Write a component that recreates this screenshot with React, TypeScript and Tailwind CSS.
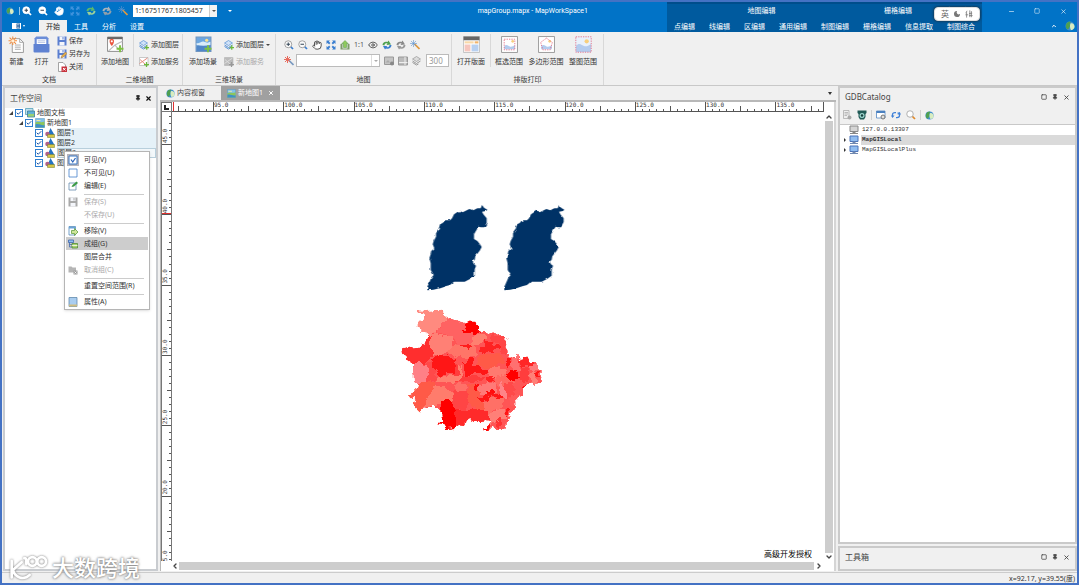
import { useEffect, useRef, useState } from "react";
import type { ReactNode } from "react";
import {
  Check,
  ChevronDown,
  ChevronLeft,
  ChevronRight,
  ChevronUp,
  Eye,
  Hand,
  Minus,
  Moon,
  Pin,
  Square,
  X,
} from "lucide-react";

type IconProps = { className?: string };

const small = "h-[10px] w-[10px] shrink-0";
const big = "h-[17px] w-[17px] shrink-0";

const Zoomer = ({ plus, light }: { plus?: boolean; light?: boolean }) => (
  <svg viewBox="0 0 20 20" className={small}>
    <path d="M12 12l6 6" stroke={light ? "#fff" : "#3b7fd0"} strokeWidth="3.5" />
    <circle cx="8.5" cy="8.5" r="7" fill={light ? "#fff" : "#fafafa"} stroke={light ? "#fff" : "#888"} strokeWidth="1.5" />
    <path d={plus ? "M5 8.5h7M8.5 5v7" : "M5 8.5h7"} stroke="#345" strokeWidth="2" />
  </svg>
);

const FullExtent = ({ color = "#3b7fd0" }: { color?: string }) => (
  <svg viewBox="0 0 20 20" className={small} fill={color}>
    <path d="M1 1h7L5.800 3.200l3 3-2.600 2.600-3-3L1 8zM19 1v7l-2.200-2.200-3 3-2.600-2.600 3-3L12 1zM1 19v-7l2.200 2.200 3-3 2.600 2.600-3 3L8 19zM19 19h-7l2.200-2.200-3-3 2.600-2.600 3 3L19 12z" />
  </svg>
);

const Globe = ({ className = small }: IconProps) => (
  <svg viewBox="0 0 20 20" className={className}>
    <circle cx="10" cy="10" r="9" fill="#3f8fd0" />
    <path d="M10 1a9 9 0 0 0-5 16c3-1 3-4 5-6s-2-4 0-6 1-3 0-4z" fill="#4fa050" />
    <path d="M11 5c4-2 7 1 8 5s-3 8-7 8c-2-3-3-9-1-13z" fill="#d8ecc0" />
  </svg>
);

const Refresh = ({ tone = "#3b7fd0", second = "#4ea04e" }: { tone?: string; second?: string }) => (
  <svg viewBox="0 0 20 20" className={small}>
    <path d="M1 10c0-5 5-8 10-6l2-3 5 8-9 1 2-3C7 6 5 8 5 11z" fill={second} />
    <path d="M19 10c0 6-6 9-11 7l-2 2-4-7h9l-2 2c4 1 6-1 6-4z" fill={tone} />
  </svg>
);

const Wand = ({ red }: { red?: boolean }) => (
  <svg viewBox="0 0 20 20" className={small}>
    <path d="M9 8l10 10" stroke={red ? "#7a9ac0" : "#e0993d"} strokeWidth="3.500" />
    <path d="M7 0v14M0 7h14M2 2l10 10M12 2L2 12" stroke={red ? "#e96b5d" : "#5f93cf"} strokeWidth={red ? 2 : 1.200} />
  </svg>
);

const GreenUp = () => (
  <svg viewBox="0 0 20 20" className={small}>
    <path d="M1 8l4-1v10h10V7l4 1v11H1z" fill="#7c9a6a" />
    <path d="M10 1l6 6h-3v8H7V7H4z" fill="#8fc95c" stroke="#4c9a38" />
  </svg>
);

const Disk = ({ gray, pencil }: { gray?: boolean; pencil?: boolean }) => (
  <svg viewBox="0 0 20 20" className={small}>
    <path d="M1 1h18v18H1z" fill={gray ? "#a9a9a9" : "#5b7fd0"} />
    <path d="M5 1h10v7H5zM5 12h10v7H5z" fill="#f4f6fb" />
    <path d="M11 2h2v5h-2z" fill={gray ? "#a9a9a9" : "#5b7fd0"} />
    {pencil && <path d="M8 18l2-5 7-7 3 3-7 7z" fill="#e9b04a" stroke="#8a6a3a" />}
  </svg>
);

const CloseDoc = () => (
  <svg viewBox="0 0 20 20" className={small}>
    <path d="M3 1h9l5 5v13H3z" fill="#fff" stroke="#888" strokeWidth="1.500" />
    <path d="M9 9h11v11H9z" fill="#c8323c" />
    <path d="M12 12l5 5M17 12l-5 5" stroke="#fff" strokeWidth="2" />
  </svg>
);

const NewDoc = () => (
  <svg viewBox="0 0 32 32" className={big}>
    <path d="M8 5h14l7 7v19H8z" fill="#fdfdfd" stroke="#888" strokeWidth="1.500" />
    <path d="M22 5v7h7M13 17h11M13 21h11M13 25h11" fill="none" stroke="#999" strokeWidth="1.500" />
    <path d="M9 1v16M1 9h16M3 3l12 12M15 3L3 15" stroke="#f08a3c" strokeWidth="2" />
    <circle cx="9" cy="9" r="3" fill="#fff0d8" />
  </svg>
);

const OpenFolder = () => (
  <svg viewBox="0 0 32 32" className={big}>
    <path d="M3 4l3-3h20l3 3v14H3z" fill="#6b8dd8" />
    <path d="M7 6h18v10H7z" fill="#fff" />
    <path d="M9 9h14M9 12h14" stroke="#a9b9df" strokeWidth="1.500" />
    <path d="M1 15h30v14q0 2-2 2H3q-2 0-2-2z" fill="#5f82d2" />
  </svg>
);

const AddMap = () => (
  <svg viewBox="0 0 32 32" className={big}>
    <path d="M1 2h28v27H1z" fill="#fff" stroke="#777" strokeWidth="1.500" />
    <path d="M1 2h28v4H1z" fill="#666" />
    <path d="M3 28l12-11 14-7M15 17l8 9" fill="none" stroke="#bbb" strokeWidth="2" />
    <path d="M9 19C3 12 4 5 9 5s6 7 0 14z" fill="#e9573f" />
    <circle cx="9" cy="10" r="2" fill="#fff" />
    <path d="M18 24h13M24.500 17.500v13" stroke="#7cc142" strokeWidth="3.500" />
  </svg>
);

const AddScene = () => (
  <svg viewBox="0 0 32 32" className={big}>
    <path d="M2 2h28v27H2z" fill="#6da7e0" stroke="#6f95c0" strokeWidth="2" />
    <path d="M3 20c5-7 8-1 12-4s8-4 14 1v11H3z" fill="#4f86c8" />
    <path d="M3 13c7 2 9-4 14-2s8 2 12 0v6c-8 2-18 2-26 0z" fill="#d9ecf9" />
    <circle cx="22" cy="8" r="3" fill="#ffe28a" />
    <path d="M18 24h13M24.500 17.500v13" stroke="#7cc142" strokeWidth="3.500" />
  </svg>
);

const AddLayer = ({ gray }: { gray?: boolean }) => (
  <svg viewBox="0 0 20 20" className={small}>
    <path d="M1 6l8-5 8 5-8 5z" fill={gray ? "#ddd" : "#cfe2f8"} stroke={gray ? "#999" : "#5b93d6"} strokeWidth="1.500" />
    <path d="M1 10l8 5 8-5M1 13l8 5 4-2" fill="none" stroke={gray ? "#999" : "#5b93d6"} strokeWidth="2" />
    {!gray && <path d="M11 15h9M15.500 10.500v9" stroke="#6cb83a" strokeWidth="2.500" />}
  </svg>
);

const AddService = ({ gray }: { gray?: boolean }) => (
  <svg viewBox="0 0 20 20" className={small}>
    <path d="M1 1h17v16H1z" fill={gray ? "#bbb" : "#fff"} stroke={gray ? "#aaa" : "#999"} />
    <path d="M1 13L17 2M2 5l11 10" stroke={gray ? "#ddd" : "#e78a7c"} strokeWidth="2" />
    <path d="M10 15h10M15 10v10" stroke={gray ? "#999" : "#6cb83a"} strokeWidth="2.500" />
  </svg>
);

const LayoutPage = () => (
  <svg viewBox="0 0 32 32" className={big}>
    <path d="M1 1h30v30H1z" fill="#fff" stroke="#999" />
    <path d="M1 1h30v7H1z" fill="#666" />
    <path d="M3 10h17v4H3z" fill="#f9d9a8" />
    <path d="M22 10h7v4h-7z" fill="#f2b36a" />
    <path d="M3 16h11v13H3z" fill="#f6c6bd" />
    <path d="M16 16h13v13H16z" fill="#b8d0f0" />
  </svg>
);

const RangeIcon = ({ kind }: { kind: "box" | "poly" | "all" }) => (
  <svg viewBox="0 0 32 32" className={big}>
    {kind !== "all" && <path d="M1 1h30v30H1z" fill="#fff" stroke="#888" strokeWidth="1.500" />}
    {kind === "all" && <path d="M1 1h30v30H1z" fill="#e9f1fb" />}
    <path
      d={kind === "all" ? "M2 19c6-8 11-1 15 0s8 0 13-4v15H2z" : "M6 20c4-6 8-1 11 0s6-1 9-3v8H6z"}
      fill="#b4ccee"
    />
    <circle cx="22" cy="10" r={kind === "all" ? 4 : 2.500} fill="#f7cf7d" />
    <path
      d={kind === "poly" ? "M16 4l11 8-4 14H9L5 12z" : kind === "box" ? "M6 6h20v20H6z" : "M1.500 1.500h29v29h-29z"}
      fill="none"
      stroke="#e0607a"
      strokeWidth="1.500"
      strokeDasharray="2.500 2"
    />
  </svg>
);

const Picture = ({ className = small }: IconProps) => (
  <svg viewBox="0 0 20 20" className={className}>
    <path d="M1 1h18v18H1z" fill="#7fc0ea" stroke="#5d94b8" />
    <path d="M1 9c6-4 9 2 18-2v12H1z" fill="#8cc65c" />
    <path d="M1 13c6-3 12 3 18 1v5H1z" fill="#3f8fc8" />
    <path d="M3 4h8v2H3z" fill="#f4e8a0" />
  </svg>
);

const MapStack = () => (
  <svg viewBox="0 0 20 20" className={small}>
    <path d="M1 1h15v12H1z" fill="#bfe0ee" stroke="#4d9cb4" strokeWidth="1.500" />
    <path d="M5 6h14v12H5z" fill="#5fb0d8" stroke="#3a7890" strokeWidth="1.500" />
    <path d="M6 13c5-4 8 1 12-2v6H6z" fill="#9bd070" />
  </svg>
);

const LayerIcon = () => (
  <svg viewBox="0 0 20 20" className={small}>
    <path d="M11 0l8 14H5z" fill="#2474c4" />
    <circle cx="5" cy="12" r="4.500" fill="#b0608c" />
    <path d="M5 13h14v6H5z" fill="#d6c545" stroke="#6c7a30" />
  </svg>
);

const Monitor = ({ gray }: { gray?: boolean }) => (
  <svg viewBox="0 0 20 20" className={small}>
    <path d="M2 2h16v11H2z" fill={gray ? "#d5d5d5" : "#8fbcf0"} stroke={gray ? "#888" : "#4a72b8"} strokeWidth="2" />
    <path d="M7 13h6v3h5v2H2v-2h5z" fill={gray ? "#888" : "#7088b0"} />
  </svg>
);

const MenuIcon = ({ kind }: { kind?: string }) => {
  if (kind === "checked")
    return (
      <svg viewBox="0 0 24 24" className="h-3 w-3">
        <path d="M0 0h24v24H0z" fill="#b4b4bc" />
        <path d="M4 4h16v16H4z" fill="#fff" stroke="#3a78c8" strokeWidth="2" />
        <path d="M8 11l3.500 5L17 8" fill="none" stroke="#2a62b8" strokeWidth="2.500" />
      </svg>
    );
  if (kind === "unchecked")
    return (
      <svg viewBox="0 0 24 24" className="h-3 w-3">
        <path d="M4 4h16v16H4z" fill="#fff" stroke="#3a78c8" strokeWidth="1.500" />
      </svg>
    );
  if (kind === "edit")
    return (
      <svg viewBox="0 0 20 20" className={small}>
        <path d="M2 4h14v14H2z" fill="#fff" stroke="#5b84a8" strokeWidth="1.500" />
        <path d="M7 12l2-4 8-7 3 3-8 7z" fill="#3b9a45" />
      </svg>
    );
  if (kind === "save") return <Disk gray />;
  if (kind === "remove")
    return (
      <svg viewBox="0 0 20 20" className={small}>
        <path d="M2 1h13v17H2z" fill="#fff" stroke="#4a84b8" strokeWidth="1.500" />
        <path d="M2 2h13v3H2z" fill="#6aa4d8" />
        <path d="M7 9h6V5l7 7-7 7v-4H7z" fill="#cfe69a" stroke="#5c9a3a" strokeWidth="1.500" />
      </svg>
    );
  if (kind === "group")
    return (
      <svg viewBox="0 0 20 20" className={small}>
        <path d="M1 2h10v5H1z" fill="#8fbcf0" stroke="#3a62a8" strokeWidth="1.500" />
        <path d="M3 7v9h5M3 11h5" fill="none" stroke="#3a62a8" strokeWidth="1.500" />
        <path d="M8 9h11v9H8z" fill="#a9d070" stroke="#4c8a30" strokeWidth="1.500" />
        <path d="M8 13h11" stroke="#fff" strokeWidth="1.500" />
      </svg>
    );
  if (kind === "ungroup")
    return (
      <svg viewBox="0 0 20 20" className={small}>
        <path d="M1 3h6l2 2h7v10H1z" fill="#b5b5b5" />
        <path d="M11 11h8v8h-8z" fill="#9d9d9d" />
        <path d="M13 13l4 4M17 13l-4 4" stroke="#fff" strokeWidth="1.500" />
      </svg>
    );
  if (kind === "props")
    return (
      <svg viewBox="0 0 20 20" className={small}>
        <path d="M2 1h16v18H2z" fill="#a9cdf0" stroke="#5b84a8" strokeWidth="1.500" />
        <path d="M2 15h16v4H2z" fill="#d0bc80" />
      </svg>
    );
  return null;
};

const BigButton = ({ icon, label, className = "w-[38px]" }: { icon: ReactNode; label: string; className?: string }) => (
  <button className={`flex h-[31px] flex-col items-center justify-between whitespace-nowrap ${className}`}>
    {icon}
    <span>{label}</span>
  </button>
);

const SmallButton = ({ icon, label, disabled, arrow }: { icon: ReactNode; label: string; disabled?: boolean; arrow?: boolean }) => (
  <button disabled={disabled} className="flex items-center gap-[2px] whitespace-nowrap disabled:text-[#a8a8a8]">
    {icon}
    {label}
    {arrow && <span className="border-x-2 border-t-2 border-x-transparent border-t-[#444]" />}
  </button>
);

const RibbonGroup = ({ label, className, children }: { label: string; className: string; children: ReactNode }) => (
  <section className={`flex flex-col justify-between border-r border-[#d8d8d8] ${className}`}>
    <div className="flex">{children}</div>
    <h2 className="text-center">{label}</h2>
  </section>
);

const contextGroups = [
  { title: "地图编辑", tabs: ["点编辑", "线编辑", "区编辑", "通用编辑", "制图编辑"] },
  { title: "栅格编辑", tabs: ["栅格编辑", "信息提取"] },
  { title: "制图综合", tabs: ["制图综合"] },
];

const TitleBar = () => (
  <header className="flex h-[30px] shrink-0 bg-[#0173c7] text-white">
    <div className="flex flex-1 flex-col">
      <div className="flex h-[18px] items-center pl-1">
        <Globe className="mr-[5px] h-2 w-2" />
        <span className="mr-[2px] h-2 w-px bg-white/60" />
        <div className="flex items-center gap-[6px]">
          <button aria-label="放大"><Zoomer plus light /></button>
          <button aria-label="缩小"><Zoomer light /></button>
          <button aria-label="平移"><Hand className={small} fill="white" stroke="#e8f2fa" /></button>
          <button aria-label="全图"><FullExtent color="#3f92dc" /></button>
          <button aria-label="更新"><Refresh tone="#9bd09b" second="#5cb86c" /></button>
          <button aria-label="停止"><Refresh tone="#8f9faa" second="#a9b3ba" /></button>
          <button aria-label="清除"><Wand /></button>
        </div>
        <div className="ml-[5px] flex h-3 w-[84px] bg-white text-[#333]">
          <input aria-label="比例尺" defaultValue="1:16751767.1805457" className="w-full min-w-0 px-[2px] outline-none" />
          <button aria-label="选择比例尺" className="flex w-2 shrink-0 items-center justify-center border-l border-[#ccc] bg-[#f2f2f2]">
            <span className="border-x-2 border-t-2 border-x-transparent border-t-[#555]" />
          </button>
        </div>
        <span className="ml-[11px] border-x-2 border-t-2 border-x-transparent border-t-white" />
        <h1 className="ml-auto pr-[79px] font-['Roboto',sans-serif]">mapGroup.mapx - MapWorkSpace1</h1>
      </div>
      <nav className="flex h-3 items-center pl-[10px]">
        <button aria-label="文件" className="mr-[13px] flex w-[14px] items-center gap-[2px]">
          <svg viewBox="0 0 18 12" className="h-[6px] w-[9px]">
            <path d="M0 0h18v12H0z" fill="#fff" />
            <path d="M9 1h7v10H9z" fill="#1b5a9a" />
            <path d="M10 3h5M10 6h5M10 9h5" stroke="#fff" />
          </svg>
          <span className="border-x-[1px] border-t-2 border-x-transparent border-t-white" />
        </button>
        <button className="h-full w-7 bg-[#f0f0f0] pt-[2px] text-[#222]">开始</button>
        <button className="h-full w-7 pt-[2px]">工具</button>
        <button className="h-full w-7 pt-[2px]">分析</button>
        <button className="h-full w-7 pt-[2px]">设置</button>
      </nav>
    </div>

    <div className="relative flex border-t-2 border-[#004d8b] bg-[#005a9e]">
      {contextGroups.map((group) => (
        <div key={group.title} className="flex flex-col">
          <div className="flex h-4 items-center justify-center pb-[2px]">{group.title}</div>
          <div className="flex h-3 items-center gap-[14px] px-[7px] pt-[2px]">
            {group.tabs.map((tab) => (
              <button key={tab} className="whitespace-nowrap">{tab}</button>
            ))}
          </div>
        </div>
      ))}
      <div className="absolute top-[3px] right-[2px] flex h-[14px] w-[46px] items-center justify-around rounded-sm border border-[#ddd] bg-white px-1 text-[8px] text-[#666] shadow-[0_0_3px_#222]">
        英
        <Moon className="h-2 w-2" fill="#777" stroke="none" />
        <svg viewBox="0 0 20 20" className="h-2 w-2" fill="none" stroke="#777" strokeWidth="2">
          <path d="M5 2L2 8M4 6v13M1 12h7M10 9l8-1M12 1v17M16 3v15M10 14h9" />
        </svg>
      </div>
    </div>

    <div className="flex w-[95px] flex-col">
      <div className="flex h-[18px] items-center justify-around pl-4">
        <button aria-label="最小化"><Minus className="h-[7px] w-[7px]" /></button>
        <button aria-label="还原"><Square className="h-[6px] w-[6px]" /></button>
        <button aria-label="关闭"><X className="h-[7px] w-[7px]" /></button>
      </div>
      <div className="flex h-3 items-center justify-end gap-2 pr-[2px]">
        <button aria-label="折叠功能区"><ChevronUp className="h-[6px] w-[6px]" strokeWidth={4} /></button>
        <button aria-label="帮助"><Globe /></button>
      </div>
    </div>
  </header>
);

const Ribbon = () => (
  <div className="flex h-[54px] shrink-0 border-b border-[#c8c8c8] bg-[#f0f0f0] pt-[2px]">
    <RibbonGroup label="文档" className="w-[95px]">
      <div className="flex pt-[2px] pl-[2px]">
        <BigButton icon={<NewDoc />} label="新建" className="w-[25px]" />
        <BigButton icon={<OpenFolder />} label="打开" className="w-[25px]" />
      </div>
      <div className="flex flex-col gap-[3px] pt-[2px] pl-[3px]">
        <SmallButton icon={<Disk />} label="保存" />
        <SmallButton icon={<Disk pencil />} label="另存为" />
        <SmallButton icon={<CloseDoc />} label="关闭" />
      </div>
    </RibbonGroup>

    <RibbonGroup label="二维地图" className="w-[86px]">
      <div className="border-r border-[#d8d8d8] pt-[2px]">
        <BigButton icon={<AddMap />} label="添加地图" className="w-9" />
      </div>
      <div className="flex flex-col gap-[7px] pt-[6px] pl-[5px]">
        <SmallButton icon={<AddLayer />} label="添加图层" />
        <SmallButton icon={<AddService />} label="添加服务" />
      </div>
    </RibbonGroup>

    <RibbonGroup label="三维场景" className="w-[93px]">
      <div className="pt-[2px] pl-px">
        <BigButton icon={<AddScene />} label="添加场景" />
      </div>
      <div className="flex flex-col gap-[7px] pt-[6px] pl-[2px]">
        <SmallButton icon={<AddLayer />} label="添加图层" arrow />
        <SmallButton icon={<AddService gray />} label="添加服务" disabled />
      </div>
    </RibbonGroup>

    <RibbonGroup label="地图" className="w-[176px]">
      <div className="flex flex-col gap-1 pt-[6px] pl-2">
        <div className="flex h-[10px] items-center gap-1">
          <button aria-label="放大"><Zoomer plus /></button>
          <button aria-label="缩小"><Zoomer /></button>
          <button aria-label="平移"><Hand className={small} fill="white" stroke="#333" /></button>
          <button aria-label="全图"><FullExtent /></button>
          <button aria-label="上一级"><GreenUp /></button>
          <button className="w-[10px] whitespace-nowrap text-[#555]">1:1</button>
          <button aria-label="可见性"><Eye className={small} color="#444" /></button>
          <button aria-label="更新"><Refresh /></button>
          <button aria-label="停止更新"><Refresh tone="#999" second="#888" /></button>
          <button aria-label="清除"><Wand /></button>
        </div>
        <div className="flex h-[13px] items-center gap-1">
          <button aria-label="闪烁"><Wand red /></button>
          <div className="-ml-[2px] flex h-full w-[84px] border border-[#bbb] bg-white">
            <input aria-label="图层" className="w-full min-w-0 outline-none" />
            <button aria-label="选择图层" className="flex w-2 shrink-0 items-center justify-center border-l border-[#ddd]">
              <span className="border-x-2 border-t-2 border-x-transparent border-t-[#aaa]" />
            </button>
          </div>
          <svg viewBox="0 0 20 20" className={small}>
            <path d="M1 2h18v15H1z" fill="#c4c4c4" stroke="#999" strokeWidth="2" />
            <path d="M3 13l5-5 4 5z" fill="#aaa" />
            <circle cx="16" cy="15" r="4" fill="#888" />
          </svg>
          <svg viewBox="0 0 20 20" className={small}>
            <path d="M1 2h18v16H1z" fill="#bbb" stroke="#999" strokeWidth="2" />
            <path d="M14 2v16M2 13h17" stroke="#eee" strokeWidth="2" />
          </svg>
          <AddLayer gray />
          <input aria-label="分辨率" defaultValue="300" className="h-full w-[23px] border border-[#bbb] bg-white px-[2px] text-[8px] text-[#999] outline-none" />
        </div>
      </div>
    </RibbonGroup>

    <RibbonGroup label="排版打印" className="w-[152px]">
      <div className="border-r border-[#d8d8d8] pt-[2px]">
        <BigButton icon={<LayoutPage />} label="打开版面" />
      </div>
      <div className="flex pt-[2px]">
        <BigButton icon={<RangeIcon kind="box" />} label="框选范围" className="w-9" />
        <BigButton icon={<RangeIcon kind="poly" />} label="多边形范围" />
        <BigButton icon={<RangeIcon kind="all" />} label="整图范围" className="w-9" />
      </div>
    </RibbonGroup>
  </div>
);

const TreeCheck = ({ label }: { label: string }) => (
  <span className="relative flex">
    <input type="checkbox" defaultChecked aria-label={label} className="h-2 w-2 appearance-none border border-[#2f7fd0] bg-white" />
    <Check className="pointer-events-none absolute inset-[1px] h-[6px] w-[6px]" color="#174f9c" strokeWidth={4} />
  </span>
);

const Caret = () => (
  <svg viewBox="0 0 8 8" className="h-1 w-1"><path d="M8 0v8H0z" fill="#444" /></svg>
);

const layers = [
  { name: "图层1", row: "bg-[#e5f1f8]" },
  { name: "图层2", row: "bg-[#e5f1f8]" },
  { name: "图层3", row: "border border-[#b8cfdc] bg-[#f3f8fb]" },
  { name: "图层4", row: "" },
];

const menu = [
  { label: "可见(V)", icon: "checked" },
  { label: "不可见(U)", icon: "unchecked" },
  { label: "编辑(E)", icon: "edit", line: true },
  { label: "保存(S)", icon: "save", disabled: true },
  { label: "不保存(U)", disabled: true, line: true },
  { label: "移除(V)", icon: "remove" },
  { label: "成组(G)", icon: "group" },
  { label: "图层合并" },
  { label: "取消组(C)", icon: "ungroup", disabled: true, line: true },
  { label: "重置空间范围(R)", line: true },
  { label: "属性(A)", icon: "props" },
];

const ContextMenu = () => (
  <ul role="menu" className="absolute top-[63px] left-[59px] z-10 w-[86px] border border-[#b5b5b5] bg-white p-px shadow-sm">
    {menu.map((item) => (
      <li key={item.label}>
        <button
          role="menuitem"
          disabled={item.disabled}
          className={`flex h-[13px] w-full items-center text-[#333] disabled:text-[#aaa] ${item.icon === "group" ? "bg-[#cdcdcd]" : ""}`}
        >
          <span className="flex w-[14px] justify-center"><MenuIcon kind={item.icon} /></span>
          <span className="pl-1 whitespace-nowrap">{item.label}</span>
        </button>
        {item.line && <div className="mr-1 ml-[18px] h-[3px] border-b border-[#ccc]" />}
      </li>
    ))}
  </ul>
);

const Workspace = () => (
  <aside className="relative flex w-[155px] shrink-0 flex-col border-2 border-[#c9ccd0] bg-white">
    <div className="flex h-5 shrink-0 items-center bg-[#f0f0f0] pr-1 pl-[5px] text-[8px] text-[#444]">
      工作空间
      <button aria-label="固定" className="mr-1 ml-auto"><Pin className="h-[6px] w-[6px]" fill="#222" color="#222" strokeWidth={3} /></button>
      <button aria-label="关闭"><X className="h-[7px] w-[7px]" color="#111" strokeWidth={4} /></button>
    </div>
    <ul className="text-[#333]">
      <li className="flex h-[10px] items-center gap-[2px] pl-1"><Caret /><TreeCheck label="地图文档" /><MapStack />地图文档</li>
      <li className="flex h-[10px] items-center gap-[2px] pl-[14px]"><Caret /><TreeCheck label="新地图1" /><Picture />新地图1</li>
      {layers.map((layer) => (
        <li key={layer.name} className="flex h-[10px] items-center gap-[2px] pl-[30px]">
          <TreeCheck label={layer.name} />
          <LayerIcon />
          <span className={`flex h-full flex-1 items-center ${layer.row}`}>{layer.name}</span>
        </li>
      ))}
    </ul>
    <ContextMenu />
  </aside>
);

const STEP = 7.03;
const ticks = Array.from({ length: 320 }, (_, i) => i - 6);

// labels are only drawn while they still fit on the ruler
const useRulerSize = () => {
  const ref = useRef<SVGSVGElement>(null);
  const [size, setSize] = useState({ width: 0, height: 0 });

  useEffect(() => {
    if (!ref.current) return;
    const observer = new ResizeObserver(([entry]) => {
      setSize({ width: entry.contentRect.width, height: entry.contentRect.height });
    });
    observer.observe(ref.current);
    return () => observer.disconnect();
  }, []);

  return { ref, ...size };
};

const HorizontalRuler = () => {
  const { ref, width } = useRulerSize();
  const shown = ticks.filter((i) => 41 + i * STEP < width);

  return (
    <svg ref={ref} className="h-[10px] w-0 flex-1 border-r border-b border-[#555] bg-white" shapeRendering="crispEdges">
      {shown.map((i) => {
        const x = Math.round(41 + i * STEP) + 0.5;
        const top = i % 10 === 0 ? 0 : i % 5 === 0 ? 4 : 7;
        return <line key={i} x1={x} x2={x} y1={top} y2={10} stroke="#555" />;
      })}
      {shown.filter((i) => i % 10 === 0 && 65 + i * STEP < width).map((i) => (
        <text key={i} x={42 + i * STEP} y={5} fontSize={6} fontFamily="DejaVu Sans Mono, monospace" fill="#333">
          {(95 + i / 2).toFixed(1)}
        </text>
      ))}
      <line x1={1.5} x2={1.5} y1={0} y2={10} stroke="#e03030" />
    </svg>
  );
};

const VerticalRuler = () => {
  const { ref, height } = useRulerSize();
  const shown = ticks.filter((i) => 14 + i * STEP < height);

  return (
    <svg ref={ref} className="w-[11px] shrink-0 border-x border-[#777] bg-white" shapeRendering="crispEdges">
      {shown.map((i) => {
        const y = Math.round(32 + i * STEP) + 0.5;
        const left = i % 10 === 0 ? 0 : i % 5 === 0 ? 5 : 7;
        return <line key={i} x1={left} x2={10} y1={y} y2={y} stroke="#555" />;
      })}
      {shown.filter((i) => i >= 0 && i % 10 === 0).map((i) => (
        <text key={i} transform={`translate(5 ${31 + i * STEP}) rotate(-90)`} fontSize={6} fontFamily="DejaVu Sans Mono, monospace" fill="#333">
          {(45 - i / 2).toFixed(1)}
        </text>
      ))}
      <line x1={0} x2={10} y1={101.500} y2={101.500} stroke="#e03030" />
    </svg>
  );
};

const province =
  "112,286 112,275 118,262 124,248 131,240 122,225 122,205 118,190 122,178 124,168 133,160 128,148 131,138 138,125 138,115 145,105 150,88 158,84 165,76 180,76 186,70 192,58 208,47 218,52 238,42 250,46 262,40 272,40 276,30 282,38 292,44 288,48 276,50 280,58 290,70 290,84 283,97 272,97 266,95 260,104 252,118 252,132 262,138 270,148 275,156 270,166 262,176 256,184 254,194 248,200 252,208 258,212 254,224 254,242 240,252 224,260 208,260 192,260 180,270 166,274 148,280 130,284";

const outline =
  "80,346 110,348 148,344 160,356 170,370 190,374 212,380 230,385 238,380 256,380 262,394 272,406 288,408 300,416 320,414 332,420 345,432 352,440 346,456 352,466 356,486 366,488 374,484 384,480 392,488 386,496 400,488 414,488 418,500 438,500 442,512 440,522 452,532 458,548 452,562 432,570 420,566 408,572 400,580 400,600 390,604 378,612 380,626 376,640 366,648 360,660 352,670 350,690 346,708 330,702 318,704 304,700 292,706 282,706 290,692 300,684 292,676 270,678 256,682 240,672 228,676 222,690 204,688 190,700 168,702 160,690 144,688 156,676 152,650 146,640 130,632 118,640 104,636 92,652 80,640 72,628 76,612 56,602 78,592 84,570 72,560 70,530 70,508 52,496 50,484 40,480 36,462 60,458 84,456 104,446 110,424 116,416 96,412 86,400 86,378 104,370 98,358 84,354";

const counties = [
  ["#ff8a7f", "70,330 162,338 168,372 152,390 140,412 116,420 80,412"],
  ["#ff6262", "168,372 240,378 275,408 250,428 246,455 205,460 186,424 142,412 152,390"],
  ["#ff8074", "118,420 142,412 160,424 186,424 188,452 170,476 128,482 112,450"],
  ["#ff7468", "188,452 250,445 266,478 225,490 196,484 170,476"],
  ["#ff8070", "248,428 276,412 290,425 266,450 246,450"],
  ["#ff0000", "230,376 260,374 266,398 274,408 252,420 236,412 218,412 224,398"],
  ["#ff2e2e", "28,452 106,444 112,418 122,424 118,450 130,480 100,504 82,502 66,516 34,484"],
  ["#ff8086", "66,512 82,500 100,506 120,520 108,556 98,574 68,566"],
  ["#ff4a4a", "100,504 124,500 134,530 142,550 126,560 108,556 118,522"],
  ["#ff1616", "124,492 142,480 164,482 196,490 194,536 172,534 150,544 126,518"],
  ["#ff3c3c", "140,546 196,536 196,500 214,516 210,540 250,544 290,548 250,560 190,560"],
  ["#ff8070", "138,548 172,540 206,544 208,510 220,520 214,550 190,560 158,562 138,560"],
  ["#ff5a46", "84,566 110,556 134,562 134,580 116,606 104,640 90,656 68,630 46,604"],
  ["#ff7c6c", "134,574 176,582 190,600 188,616 156,624 130,634 104,638 116,606"],
  ["#ff7068", "188,568 228,566 230,592 198,590"],
  ["#ff4545", "190,592 232,588 240,620 222,646 192,640 186,612"],
  ["#ff5a46", "232,566 262,568 268,600 292,640 262,646 236,622"],
  ["#ff0000", "152,626 162,614 188,618 196,644 202,668 192,704 158,706 140,690 156,674"],
  ["#ff2c2c", "196,642 224,646 256,644 292,642 298,676 240,682 220,692 196,690"],
  ["#ff1818", "214,500 226,508 240,484 252,494 246,510 266,508 270,520 294,528 284,540 254,532 232,546 228,530"],
  ["#ff2424", "266,470 274,456 286,456 282,430 292,444 304,442 314,450 334,448 320,462 306,464 312,474 298,470 282,478"],
  ["#ff4646", "302,414 352,430 350,478 336,478 326,450 304,440"],
  ["#ff5a46", "256,486 282,480 332,474 342,500 312,514 292,526 262,506"],
  ["#ff1c1c", "212,452 234,444 246,458 234,462 222,458"],
  ["#ff7a70", "290,528 314,514 342,520 354,540 330,556 300,544"],
  ["#ff2020", "284,546 308,542 316,556 296,564 284,556"],
  ["#ff6a64", "320,546 354,536 372,560 350,582 330,578 316,560"],
  ["#ff7a78", "256,572 316,562 324,590 294,604 270,596"],
  ["#ff0808", "254,568 266,570 264,592 256,592"],
  ["#ff1616", "264,610 290,598 304,586 326,598 340,604 322,612 304,604 296,614 284,614 280,628"],
  ["#ff1010", "290,590 304,580 314,590 300,596"],
  ["#ff7066", "280,624 300,612 338,610 342,640 314,646 296,664 284,642"],
  ["#ff4a4a", "340,570 364,560 378,580 372,604 350,614 342,600"],
  ["#ff8488", "330,560 346,574 340,588 354,602 346,612 330,600"],
  ["#ff8078", "296,662 318,644 342,646 350,672 320,680 302,690"],
  ["#ff1616", "344,644 356,638 360,654 350,668"],
  ["#ff3030", "318,676 334,668 338,686 322,700"],
  ["#ff0808", "280,708 290,690 304,684 296,704"],
  ["#ff0404", "352,536 364,524 384,532 390,548 370,558 354,552"],
  ["#ff1616", "348,500 360,488 366,510 354,520"],
  ["#ff7070", "366,490 386,480 384,512 396,530 370,526 362,510"],
  ["#ff2828", "384,498 412,484 418,504 438,500 422,520 404,512 394,520"],
  ["#ff7c7c", "418,516 444,502 440,524 426,528"],
  ["#ff3c3c", "396,520 418,520 416,550 404,566 390,552"],
  ["#ff8078", "416,536 440,526 436,548 442,566 420,566 424,550"],
  ["#ff1414", "436,534 448,530 446,550 440,546"],
  ["#ff1414", "392,574 408,570 406,580 396,584"],
  ["#ff5a5a", "360,606 384,596 380,628 364,634"],
];

const MapShapes = () => (
  <svg viewBox="0 0 570 735" className="absolute top-[83px] left-[218px] h-[245px] w-[190px]">
    <defs>
      <filter id="coast" x="-5%" y="-5%" width="110%" height="110%">
        <feTurbulence type="fractalNoise" baseFrequency="0.07" numOctaves="1" seed="4" />
        <feDisplacementMap in="SourceGraphic" scale="9" xChannelSelector="R" yChannelSelector="G" />
      </filter>
      <filter id="borders" x="-5%" y="-5%" width="110%" height="110%">
        <feTurbulence type="fractalNoise" baseFrequency="0.06" numOctaves="2" seed="7" />
        <feDisplacementMap in="SourceGraphic" scale="20" xChannelSelector="R" yChannelSelector="G" />
      </filter>
      <clipPath id="region"><polygon points={outline} /></clipPath>
    </defs>
    <g fill="#003366" filter="url(#coast)">
      <polygon points={province} />
      <polygon points={province} transform="translate(231 0)" />
    </g>
    <g filter="url(#borders)">
      <g clipPath="url(#region)" shapeRendering="crispEdges">
        <polygon points={outline} fill="#ff5454" />
        {counties.map(([fill, points]) => (
          <polygon key={points} points={points} fill={fill} />
        ))}
      </g>
    </g>
  </svg>
);

const MapView = () => {
  const [tab, setTab] = useState("新地图1");
  const tabClass = (name: string) =>
    `flex h-full items-center gap-[2px] px-[6px] ${tab === name ? "bg-[#a0a0a0] text-white" : "text-[#444]"}`;

  return (
    <main className="flex min-w-0 flex-1 flex-col">
      <div className="flex h-4 shrink-0 items-end border-b-2 border-[#b8b8b8] pr-1">
        <button onClick={() => setTab("内容视窗")} className={`w-[61px] ${tabClass("内容视窗")}`}>
          <Globe className="h-[9px] w-[9px]" />内容视窗
        </button>
        <button onClick={() => setTab("新地图1")} className={`w-[59px] ${tabClass("新地图1")}`}>
          <Picture className="h-[9px] w-[9px]" />新地图1
          <X className="ml-auto h-[6px] w-[6px]" strokeWidth={4} />
        </button>
        <button aria-label="窗口列表" className="ml-auto self-center border-x-2 border-t-[3px] border-x-transparent border-t-[#333]" />
      </div>
      <div className="flex min-h-0 flex-1 border-l border-[#b8b8b8] bg-white">
        <div className="flex min-w-0 flex-1 flex-col">
          <div className="flex shrink-0">
            <div className="flex h-[10px] w-[11px] items-center justify-center border border-[#777]">
              <span className="h-[5px] w-[5px] border-b-2 border-l-2 border-[#222]" />
            </div>
            <HorizontalRuler />
          </div>
          <div className="flex min-h-0 flex-1">
            <VerticalRuler />
            <div className="relative min-w-0 flex-1 overflow-hidden">
              <MapShapes />
              <p className="absolute right-3 bottom-[2px] text-[8px] text-black">高级开发授权</p>
            </div>
          </div>
          <div className="flex h-[10px] shrink-0 items-center pl-[10px]">
            <ChevronLeft className="h-2 w-2" strokeWidth={4} color="#444" />
            <div className="h-2 flex-1 bg-[#cdcdcd]" />
            <ChevronRight className="h-2 w-[10px]" strokeWidth={4} color="#444" />
          </div>
        </div>
        <div className="flex w-3 shrink-0 flex-col items-center border-r-2 border-[#d5d5d5] pt-[11px] pb-[10px]">
          <ChevronUp className="h-2 w-2" strokeWidth={4} color="#444" />
          <div className="w-2 flex-1 bg-[#cdcdcd]" />
          <ChevronDown className="h-2 w-2" strokeWidth={4} color="#444" />
        </div>
      </div>
    </main>
  );
};

const PanelHeader = ({ title }: { title: string }) => (
  <div className="flex h-[18px] shrink-0 items-center gap-[5px] pr-[5px] pl-[5px] text-[8px] text-[#444]">
    <h2 className="mr-auto">{title}</h2>
    <button aria-label="最大化"><Square className="h-[6px] w-[6px]" strokeWidth={3} /></button>
    <button aria-label="固定"><Pin className="h-[6px] w-[6px]" fill="#444" strokeWidth={3} /></button>
    <button aria-label="关闭"><X className="h-[7px] w-[7px]" strokeWidth={3} /></button>
  </div>
);

const databases = [
  { name: "127.0.0.13307", offline: true },
  { name: "MapGISLocal", selected: true },
  { name: "MapGISLocalPlus" },
];

const Catalog = () => (
  <aside className="flex w-[239px] shrink-0 flex-col gap-[2px]">
    <section className="flex flex-1 flex-col border-2 border-[#cacaca] bg-[#f0f0f0]">
      <PanelHeader title="GDBCatalog" />
      <div className="flex h-[18px] shrink-0 items-center gap-[5px] pl-[2px]">
        <button aria-label="添加数据源">
          <svg viewBox="0 0 20 20" className={small}>
            <path d="M3 1h11v16H3z" fill="#eee" stroke="#aaa" strokeWidth="1.500" />
            <path d="M5 5h7M5 8h7M5 11h5" stroke="#aaa" strokeWidth="1.500" />
            <circle cx="15" cy="15" r="4" fill="#aaa" />
          </svg>
        </button>
        <button aria-label="连接">
          <svg viewBox="0 0 20 20" className={small}>
            <path d="M1 1h18v5l-2 2v6l-3 5H6l-3-5V8L1 6z" fill="#215a56" />
            <circle cx="10" cy="11" r="5" fill="#9fd8d0" />
            <circle cx="10" cy="11" r="2.500" fill="#17403e" />
          </svg>
        </button>
        <span className="-mx-px h-[10px] w-px bg-[#d0d0d0]" />
        <button aria-label="属性">
          <svg viewBox="0 0 20 20" className={small}>
            <path d="M1 2h17v14H1z" fill="#fff" stroke="#4a80c0" strokeWidth="1.500" />
            <path d="M1 2h17v4H1z" fill="#4a80c0" />
            <circle cx="14" cy="14" r="4" fill="#ddd" stroke="#777" strokeWidth="2" />
          </svg>
        </button>
        <button aria-label="刷新">
          <svg viewBox="0 0 20 20" className={small} fill="none" stroke="#3f80d8" strokeWidth="2.500">
            <path d="M3 14V9q0-4 5-4h2M13 6h4v5q0 4-5 4h-2" />
            <path d="M0 11l3 5 4-5zM13 9l4-5 3 5z" fill="#3f80d8" stroke="none" />
          </svg>
        </button>
        <button aria-label="搜索">
          <svg viewBox="0 0 20 20" className={small}>
            <path d="M12 12l6 6" stroke="#e08a2c" strokeWidth="3.500" />
            <circle cx="8" cy="8" r="6.500" fill="#fff" stroke="#999" strokeWidth="1.500" />
          </svg>
        </button>
        <span className="-mx-px h-[10px] w-px bg-[#d0d0d0]" />
        <button aria-label="地图服务"><Globe className="h-[9px] w-[9px]" /></button>
      </div>
      <ul className="flex-1 border-t border-[#c8c8c8] bg-white font-['Liberation_Mono',monospace] text-[6px] text-[#333]">
        {databases.map((db) => (
          <li key={db.name} className="flex h-[10px] items-center gap-[2px] pl-1">
            <span className={`border-y-2 border-l-2 border-y-transparent ${db.offline ? "border-l-transparent" : "border-l-[#333]"}`} />
            <span className="pl-px"><Monitor gray={db.offline} /></span>
            <span className={`flex h-full flex-1 items-center pl-px ${db.selected ? "bg-[#dadada] font-bold" : ""}`}>{db.name}</span>
          </li>
        ))}
      </ul>
    </section>
    <section className="h-[25px] border-2 border-[#cacaca] bg-[#f0f0f0]">
      <PanelHeader title="工具箱" />
    </section>
  </aside>
);

const Watermark = () => (
  <div className="pointer-events-none absolute bottom-0 left-[7px] flex items-center gap-[3px] text-[22px] leading-8 font-medium text-white [text-shadow:0_0_3px_#777,0_0_2px_#999]">
    <svg viewBox="0 0 120 80" className="h-[27px] w-10 drop-shadow-[0_0_1px_#777]" fill="none" stroke="#fff" strokeWidth="8" strokeLinecap="round">
      <path d="M8 20v50M38 24L16 44M12 46c4 24 32 34 50 16M46 12q6 0 6 8v10" />
      <circle cx="70" cy="22" r="13" />
      <circle cx="98" cy="22" r="13" />
    </svg>
    大数跨境
  </div>
);

export default function App() {
  return (
    <div className="h-screen bg-white pr-px pb-[2px] font-['Noto_Sans','Noto_Sans_CJK_SC',sans-serif] text-[7px] leading-[10px] text-[#333]">
      <div className="relative flex h-full flex-col border-2 border-[#4472c4] bg-[#f0f0f0]">
        <TitleBar />
        <Ribbon />
        <div className="flex min-h-0 flex-1 gap-[2px] pl-px">
          <Workspace />
          <MapView />
          <Catalog />
        </div>
        <footer className="mt-px flex h-[11px] shrink-0 items-center justify-end border-t border-[#ccc] pt-px pr-[2px]">
          x=92.17, y=39.55(度)
        </footer>
        <Watermark />
      </div>
    </div>
  );
}
